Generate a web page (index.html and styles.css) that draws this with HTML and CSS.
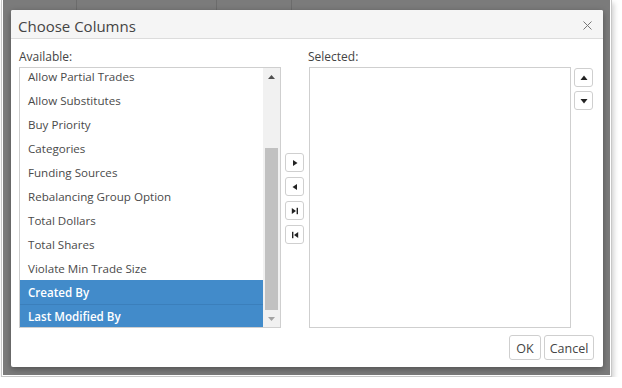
FILE: index.html
```html
<!DOCTYPE html>
<html lang="en">
<head>
    <meta charset="UTF-8">
    <meta name="viewport" content="width=device-width, initial-scale=1.0">
    <title>Choose Columns</title>
    <link rel="stylesheet" href="styles.css">
</head>
<body>
    <div class="shot">
        <div class="overlay">
            <div class="behind"><span></span><span></span><span></span><span></span></div>
            <div class="dialog">
                <div class="dialog-header">
                    <span class="title">Choose Columns</span>
                    <span class="close">
                        <svg width="9" height="9" viewBox="0 0 9 9"><path d="M0.5 0.5L8.5 8.5M8.5 0.5L0.5 8.5" stroke="#777" stroke-width="1"/></svg>
                    </span>
                </div>
                <div class="dialog-body">
                    <div class="picker">
                        <label class="caption">Available:</label>
                        <span></span>
                        <label class="caption">Selected:</label>
                        <span></span>

                        <div class="listbox">
                            <div class="items">
                                <div class="item">Allow Partial Trades</div>
                                <div class="item">Allow Substitutes</div>
                                <div class="item">Buy Priority</div>
                                <div class="item">Categories</div>
                                <div class="item">Funding Sources</div>
                                <div class="item">Rebalancing Group Option</div>
                                <div class="item">Total Dollars</div>
                                <div class="item">Total Shares</div>
                                <div class="item">Violate Min Trade Size</div>
                                <div class="item selected">Created By</div>
                                <div class="item selected">Last Modified By</div>
                            </div>
                            <div class="scrollbar">
                                <div class="arrow">
                                    <svg width="7" height="4" viewBox="0 0 7 4"><path d="M0 4L3.5 0L7 4Z" fill="#505050"/></svg>
                                </div>
                                <div class="track"><div class="thumb"></div></div>
                                <div class="arrow">
                                    <svg width="7" height="4" viewBox="0 0 7 4"><path d="M0 0L3.5 4L7 0Z" fill="#a3a3a3"/></svg>
                                </div>
                            </div>
                        </div>

                        <div class="move-buttons">
                            <button class="icon-btn" title="Add">
                                <svg width="8" height="8" viewBox="0 0 8 8"><path d="M2 1L6.5 4L2 7Z" fill="#222"/></svg>
                            </button>
                            <button class="icon-btn" title="Remove">
                                <svg width="8" height="8" viewBox="0 0 8 8"><path d="M6 1L1.5 4L6 7Z" fill="#222"/></svg>
                            </button>
                            <button class="icon-btn" title="Add all">
                                <svg width="8" height="8" viewBox="0 0 8 8"><path d="M0.8 1L5 4L0.8 7Z" fill="#222"/><rect x="5.6" y="0.8" width="1.4" height="6.4" fill="#222"/></svg>
                            </button>
                            <button class="icon-btn" title="Remove all">
                                <svg width="8" height="8" viewBox="0 0 8 8"><rect x="1" y="0.8" width="1.4" height="6.4" fill="#222"/><path d="M7.2 1L3 4L7.2 7Z" fill="#222"/></svg>
                            </button>
                        </div>

                        <div class="listbox"></div>

                        <div class="order-buttons">
                            <button class="icon-btn" title="Move up">
                                <svg width="8" height="8" viewBox="0 0 8 8"><path d="M0.5 6L4 1.5L7.5 6Z" fill="#222"/></svg>
                            </button>
                            <button class="icon-btn" title="Move down">
                                <svg width="8" height="8" viewBox="0 0 8 8"><path d="M0.5 2L4 6.5L7.5 2Z" fill="#222"/></svg>
                            </button>
                        </div>
                    </div>
                </div>
                <div class="dialog-footer">
                    <button class="btn ok">OK</button>
                    <button class="btn cancel">Cancel</button>
                </div>
            </div>
        </div>
    </div>
</body>
</html>
```

FILE: styles.css
```css
body {
    margin: 0;
    background: #fff;
    font-family: "Open Sans", "Noto Sans", sans-serif;
    color: #444;
}
.shot {
    width: 607px;
    margin-left: 1px;
    padding: 0 1px 1px 1px;
    border: 1px solid #c8c8c8;
    border-top: none;
    background: #fff;
    box-shadow: 2px 3px 5px rgba(0,0,0,0.18);
}
.overlay {
    background: #7b7b7b;
    display: flex;
    flex-direction: column;
    height: 375px;
}
.behind {
    height: 10px;
    display: grid;
    grid-template-columns: 74px 140px 75px 1fr;
}
.behind span {
    border-right: 1px solid #6c6c6c;
}
.behind span:last-child {
    border-right: none;
}
.dialog {
    margin: 0 7px 8px 8px;
    height: 357px;
    box-sizing: border-box;
    background: #fff;
    border-radius: 2px;
    box-shadow: 0 2px 6px rgba(0,0,0,0.35);
    display: flex;
    flex-direction: column;
}
.dialog-header {
    height: 29px;
    box-sizing: border-box;
    padding: 3px 11px 0 7px;
    background: #f5f5f5;
    border-bottom: 1px solid #dcdcdc;
    border-radius: 2px 2px 0 0;
    display: flex;
    align-items: center;
    justify-content: space-between;
}
.title {
    font-size: 15px;
    color: #444;
}
.close {
    display: flex;
}
.dialog-body {
    padding: 8px 9px 0 8px;
}
.picker {
    display: grid;
    grid-template-columns: 262px 19px 262px 19px;
    grid-template-rows: 17px 261px;
    column-gap: 4px;
    row-gap: 3px;
}
.caption {
    font-size: 12px;
    line-height: 17px;
    padding-top: 1px;
    color: #444;
}
.move-buttons {
    padding-top: 86px;
    display: flex;
    flex-direction: column;
    gap: 5px;
}
.order-buttons {
    padding-top: 1px;
    display: flex;
    flex-direction: column;
    gap: 4px;
}
.listbox {
    border: 1px solid #cfcfcf;
    background: #fff;
    display: flex;
    overflow: hidden;
}
.listbox + .move-buttons + .listbox {
    margin-left: 1px;
    margin-right: -1px;
}
.items {
    flex: 1;
    margin-top: -4px;
}
.item {
    height: 24px;
    box-sizing: border-box;
    padding: 2px 0 0 8px;
    line-height: 22px;
    font-size: 11.6px;
    color: #4a4a4a;
    white-space: nowrap;
}
.item.selected {
    background: #428bca;
    color: #fff;
    font-weight: 600;
}
.item.selected + .item.selected {
    box-shadow: inset 0 1px 0 #3b7fbb;
}
.scrollbar {
    width: 17px;
    background: #f1f1f1;
    display: flex;
    flex-direction: column;
}
.arrow {
    height: 17px;
    display: flex;
    align-items: center;
    justify-content: center;
}
.track {
    flex: 1;
    padding: 63px 2px 0 2px;
    display: flex;
}
.thumb {
    flex: 1;
    background: #c1c1c1;
}
.icon-btn {
    width: 19px;
    height: 19px;
    padding: 0;
    border: 1px solid #cfcfcf;
    border-radius: 3px;
    background: #fff;
    display: flex;
    align-items: center;
    justify-content: center;
    cursor: pointer;
}
.dialog-footer {
    margin-top: 7px;
    padding: 0 9px 7px 0;
    display: flex;
    justify-content: flex-end;
    gap: 3px;
}
.btn {
    height: 25px;
    padding: 1px 0 0 0;
    border: 1px solid #cfcfcf;
    border-radius: 3px;
    background: #fff;
    font-family: "Open Sans", "Noto Sans", sans-serif;
    font-size: 12.5px;
    color: #444;
    cursor: pointer;
}
.btn.ok {
    width: 32px;
}
.btn.cancel {
    width: 50px;
}
```
